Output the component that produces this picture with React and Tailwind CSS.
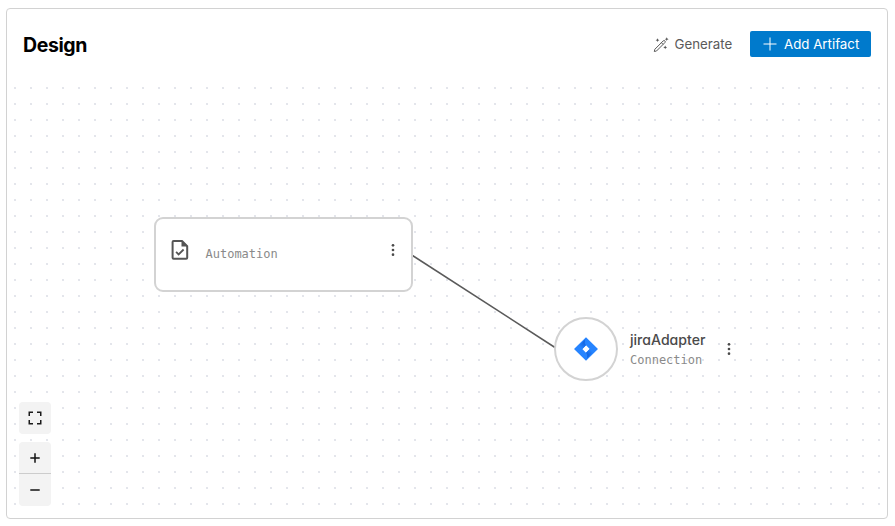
import React from "react";

function Kebab({ className = "" }) {
  return (
    <svg width="4" height="14" viewBox="0 0 4 14" fill="#4a4a4a" className={className}>
      <circle cx="2" cy="2.3" r="1.35" />
      <circle cx="2" cy="7" r="1.35" />
      <circle cx="2" cy="11.7" r="1.35" />
    </svg>
  );
}

function WandIcon() {
  return (
    <svg width="16" height="16" viewBox="0 0 16 16" fill="none" stroke="#5a5a5a" strokeWidth="1" strokeLinejoin="round">
      <path d="M1.8 12.3 10.200 3.900a1.200 1.200 0 0 1 1.700 1.700L3.500 14 1.300 14.500ZM8.400 5.700l1.700 1.700" />
      <g fill="#5a5a5a" stroke="none">
        <path d="m4.500 1.300.600 1.300 1.300.600-1.300.600-.600 1.300-.600-1.300-1.300-.600 1.300-.600Z" />
        <path d="m13.700.300.600 1.300 1.300.600-1.300.600-.600 1.300-.600-1.300-1.300-.600 1.300-.600Z" />
        <path d="m12.200 8.500.600 1.300 1.300.600-1.300.600-.600 1.300-.600-1.300-1.300-.600 1.300-.600Z" />
      </g>
    </svg>
  );
}

function JiraIcon() {
  return (
    <svg width="24" height="24" viewBox="0 0 24 24">
      <defs>
        <linearGradient id="upper" x1="12" y1="6" x2="7" y2="11" gradientUnits="userSpaceOnUse">
          <stop offset="0" stopColor="#0f5fdb" />
          <stop offset="1" stopColor="#2684ff" />
        </linearGradient>
        <linearGradient id="lower" x1="12" y1="18" x2="17" y2="13" gradientUnits="userSpaceOnUse">
          <stop offset="0" stopColor="#0f5fdb" />
          <stop offset="1" stopColor="#2684ff" />
        </linearGradient>
      </defs>
      <path fill="#2684ff" fillRule="evenodd" d="M12 .2 23.5 11.4q.6.6 0 1.2L12 23.8.5 12.6q-.6-.6 0-1.2ZM12 8.3 8.3 12l3.7 3.7 3.7-3.7Z" />
      <path fill="url(#upper)" d="M12 8.3C10.3 6.6 10.2 4 11.6 2.2L5.2 8.6 8.4 11.9Z" />
      <path fill="url(#lower)" d="M15.7 12 12 15.7C13.7 17.4 13.8 20 12.4 21.8L18.8 15.4Z" />
    </svg>
  );
}

function Header() {
  return (
    <header className="flex h-[71px] shrink-0 items-center justify-between pl-[15px] pr-4">
      <h1 className="font-['Inter',sans-serif] text-[19.5px] leading-6 font-bold tracking-[-0.4px] text-black">Design</h1>
      <div className="flex items-center font-['Inter',sans-serif] text-[13.3px]">
        <button className="mr-[19px] flex items-center gap-[6px] text-[#5a5a5a]">
          <WandIcon />
          <span className="w-[56.5px] whitespace-nowrap">Generate</span>
        </button>
        <button className="-mt-px flex h-[26px] w-[121px] items-center rounded-[2px] bg-[#007acc] pl-[13px] text-white">
          <svg width="14" height="14" viewBox="0 0 14 14" stroke="white" strokeWidth="1">
            <path d="M7 .5v13M.5 7h13" />
          </svg>
          <span className="ml-[7px] whitespace-nowrap pt-px">Add Artifact</span>
        </button>
      </div>
    </header>
  );
}

function AutomationNode() {
  return (
    <div className="absolute left-[146px] top-[137px] flex h-[75px] w-[259px] rounded-[9px] border-2 border-[#d3d3d3] bg-white">
      <svg width="18" height="22" viewBox="0 0 18 22" fill="none" className="ml-[15px] mt-5">
        <path d="M2.6 1.9H11L16.2 7.100V18.800q0 1-1 1H2.600q-1 0-1-1V2.900q0-1 1-1Z" stroke="#555555" strokeWidth="2" strokeLinejoin="round" />
        <path d="M10.500 1V7.600H17Z" fill="#555555" />
        <path d="m5.100 12.900 2.500 2.500 5-4.900" stroke="#555555" strokeWidth="1.800" />
      </svg>
      <span className="ml-[16.5px] mt-[27px] font-['DejaVu_Sans_Mono',monospace] text-xs leading-4 text-[#8a8a8a]">Automation</span>
      <Kebab className="ml-auto mr-[16.500px] mt-6" />
    </div>
  );
}

function ConnectionNode() {
  return (
    <div className="absolute left-[546px] top-[237px] flex items-center">
      <div className="flex size-16 items-center justify-center rounded-full border-2 border-[#d3d3d3] bg-white">
        <JiraIcon />
      </div>
      <div className="ml-[12px] w-[97px] pt-[2px]">
        <div className="font-['Inter',sans-serif] text-[14.100px] leading-[20px] font-medium text-[#4a4a4a] [font-feature-settings:'cv11']">jiraAdapter</div>
        <div className="font-['DejaVu_Sans_Mono',monospace] text-xs leading-5 text-[#8a8a8a]">Connection</div>
      </div>
      <Kebab />
    </div>
  );
}

function Controls() {
  return (
    <div className="absolute left-[11px] top-[322px] flex w-8 flex-col gap-2">
      <button className="flex h-8 items-center justify-center rounded-[4px] bg-[#f3f3f3]">
        <svg width="14" height="14" viewBox="0 0 14 14" fill="none" stroke="#1a1a1a" strokeWidth="1.500">
          <path d="M1.250 5V1.250H5M9 1.250h3.750V5M12.750 9v3.750H9M5 12.750H1.250V9" />
        </svg>
      </button>
      <div className="overflow-hidden rounded-[4px] bg-[#f3f3f3]">
        <button className="flex h-8 w-8 items-center justify-center border-b border-[#cccccc]">
          <svg width="10" height="10" viewBox="0 0 10 10" stroke="#111111" strokeWidth="1.500">
            <path d="M5 .3v9.400M.3 5h9.400" />
          </svg>
        </button>
        <button className="flex h-8 w-8 items-center justify-center">
          <svg width="10" height="10" viewBox="0 0 10 10" stroke="#111111" strokeWidth="1.500">
            <path d="M.3 5h9.400" />
          </svg>
        </button>
      </div>
    </div>
  );
}

export default function App() {
  return (
    <div className="h-[526px] w-[895px] overflow-hidden bg-white pl-[6px] pt-[8px]">
      <main className="flex h-[511px] w-[882px] flex-col rounded-[4px] border border-[#d2d2d2] bg-white pl-px">
        <Header />
        <section className="relative h-[430px] w-[879px] bg-[radial-gradient(circle_at_8px_8px,#dfe1e8_0.6px,transparent_1.3px)] bg-[length:16px_16px] bg-[position:-1px_0px]">
          <svg width="879" height="430" className="absolute left-0 top-0">
            <path d="M404.500 175.500 547 267.500" stroke="#5a5a5a" strokeWidth="1.500" />
          </svg>
          <AutomationNode />
          <ConnectionNode />
          <Controls />
        </section>
      </main>
    </div>
  );
}
